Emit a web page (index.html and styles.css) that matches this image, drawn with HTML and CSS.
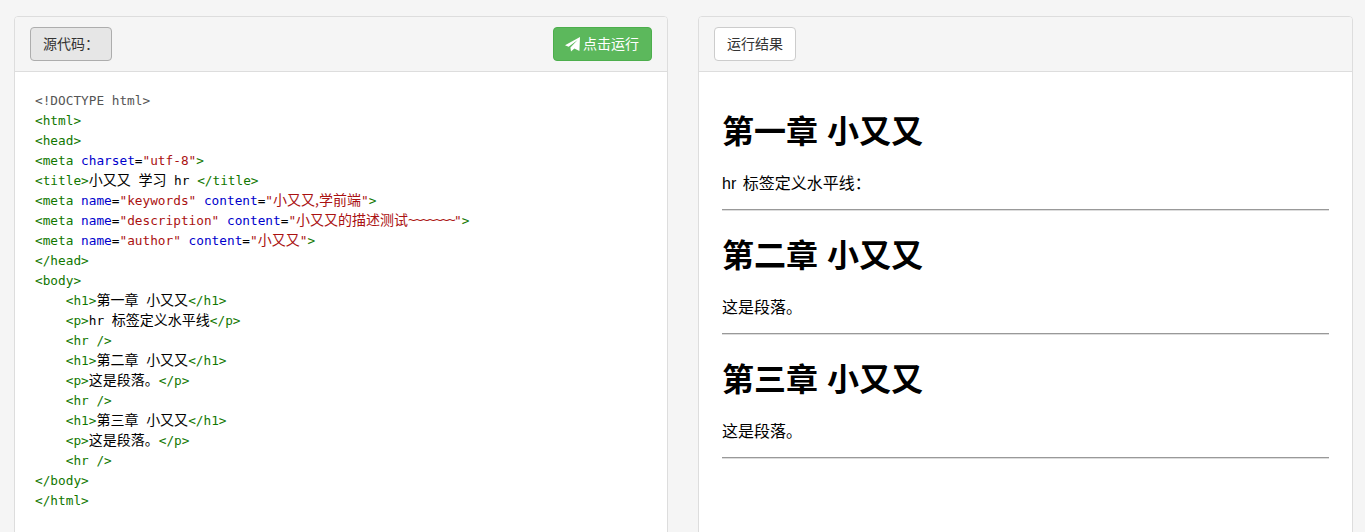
FILE: index.html
```html
<!DOCTYPE html>
<html lang="zh">
<head>
<meta charset="utf-8">
<title>小又又 学习 hr</title>
<link rel="stylesheet" href="styles.css">
</head>
<body>
<main class="page">
  <section class="panel">
    <header class="panel-head between">
      <button class="btn btn-active">源代码：</button>
      <button class="btn btn-run"><svg class="send" viewBox="0 0 15 15"><path d="M15 0 14.4 14 9.4 11.6 6 14.6 5.4 10.6 12.6 3 3.6 9.8 0 8.2Z"/></svg>点击运行</button>
    </header>
    <pre class="code"><span class="dt">&lt;!DOCTYPE html&gt;</span>
<span class="t">&lt;html&gt;</span>
<span class="t">&lt;head&gt;</span>
<span class="t">&lt;meta</span> <span class="a">charset</span>=<span class="s">"utf-8"</span><span class="t">&gt;</span>
<span class="t">&lt;title&gt;</span><span class="z">小又又</span> <span class="z">学习</span> hr <span class="t">&lt;/title&gt;</span>
<span class="t">&lt;meta</span> <span class="a">name</span>=<span class="s">"keywords"</span> <span class="a">content</span>=<span class="s">"<span class="z">小又又,学前端</span>"</span><span class="t">&gt;</span>
<span class="t">&lt;meta</span> <span class="a">name</span>=<span class="s">"description"</span> <span class="a">content</span>=<span class="s">"<span class="z">小又又的描述测试</span><span class="w">~~~~~~~</span>"</span><span class="t">&gt;</span>
<span class="t">&lt;meta</span> <span class="a">name</span>=<span class="s">"author"</span> <span class="a">content</span>=<span class="s">"<span class="z">小又又</span>"</span><span class="t">&gt;</span>
<span class="t">&lt;/head&gt;</span>
<span class="t">&lt;body&gt;</span>
    <span class="t">&lt;h1&gt;</span><span class="z">第一章</span> <span class="z">小又又</span><span class="t">&lt;/h1&gt;</span>
    <span class="t">&lt;p&gt;</span>hr <span class="z">标签定义水平线</span><span class="t">&lt;/p&gt;</span>
    <span class="t">&lt;hr /&gt;</span>
    <span class="t">&lt;h1&gt;</span><span class="z">第二章</span> <span class="z">小又又</span><span class="t">&lt;/h1&gt;</span>
    <span class="t">&lt;p&gt;</span><span class="z">这是段落。</span><span class="t">&lt;/p&gt;</span>
    <span class="t">&lt;hr /&gt;</span>
    <span class="t">&lt;h1&gt;</span><span class="z">第三章</span> <span class="z">小又又</span><span class="t">&lt;/h1&gt;</span>
    <span class="t">&lt;p&gt;</span><span class="z">这是段落。</span><span class="t">&lt;/p&gt;</span>
    <span class="t">&lt;hr /&gt;</span>
<span class="t">&lt;/body&gt;</span>
<span class="t">&lt;/html&gt;</span></pre>
  </section>
  <section class="panel">
    <header class="panel-head">
      <button class="btn btn-plain">运行结果</button>
    </header>
    <article class="result">
      <h1>第一章 小又又</h1>
      <p>hr 标签定义水平线：</p>
      <hr>
      <h1>第二章 小又又</h1>
      <p>这是段落。</p>
      <hr>
      <h1>第三章 小又又</h1>
      <p>这是段落。</p>
      <hr>
    </article>
  </section>
</main>
</body>
</html>
```
FILE: styles.css
```css
html, body { margin: 0; height: 100%; overflow: hidden; }
body {
  background: #f5f5f5;
  color: #333;
  font-family: "Liberation Sans", "Noto Sans CJK SC", sans-serif;
  font-size: 14px;
}
.page {
  display: grid;
  grid-template-columns: 654px 655px;
  column-gap: 30px;
  padding: 16px 0 0 14px;
}
.panel {
  height: 560px;
  box-sizing: border-box;
  background: #fff;
  border: 1px solid #ddd;
  border-radius: 4px;
}
.panel-head {
  display: flex;
  align-items: center;
  height: 55px;
  box-sizing: border-box;
  padding: 10px 15px;
  background: #f5f5f5;
  border-bottom: 1px solid #ddd;
  border-radius: 3px 3px 0 0;
}
.between { justify-content: space-between; }
.btn {
  display: inline-flex;
  align-items: center;
  height: 34px;
  box-sizing: border-box;
  padding: 6px 12px;
  border: 1px solid #ccc;
  border-radius: 4px;
  background: #fff;
  color: #333;
  font: inherit;
  font-size: 14px;
  line-height: 20px;
  white-space: nowrap;
}
.btn-active { width: 82px; background: #e6e6e6; border-color: #adadad; }
.btn-plain { width: 82px; }
.btn-run { width: 99px; padding: 6px 11px; background: #5cb85c; border-color: #4cae4c; color: #fff; }
.send { flex: none; width: 15px; height: 15px; margin-right: 3px; fill: #fff; }
.code {
  margin: 0;
  padding: 19px 19px 0 20px;
  font-family: "DejaVu Sans Mono", "Noto Sans CJK SC", monospace;
  font-size: 12.75px;
  line-height: 20px;
  color: #000;
  white-space: pre;
}
.z { font-family: "Noto Sans CJK SC", sans-serif; font-size: 14px; line-height: 1; }
.w { font-family: "Liberation Sans", sans-serif; font-size: 14px; line-height: 1; letter-spacing: -1.6px; }
.dt { color: #555; }
.t { color: #170; }
.a { color: #00c; }
.s { color: #a11; }
.result { padding: 0 23px; color: #000; }
.result h1 {
  margin: 0;
  padding-top: 25px;
  font-size: 32px;
  line-height: 40px;
  font-weight: 700;
}
.result h1:first-child { padding-top: 40px; }
.result p {
  margin: 0;
  padding-top: 21px;
  font-size: 16px;
  line-height: 21px;
  word-spacing: 2px;
}
.result hr {
  margin: 15px 0 0;
  border: 0;
  border-top: 1px solid #999;
  border-bottom: 1px solid #ddd;
}
```
